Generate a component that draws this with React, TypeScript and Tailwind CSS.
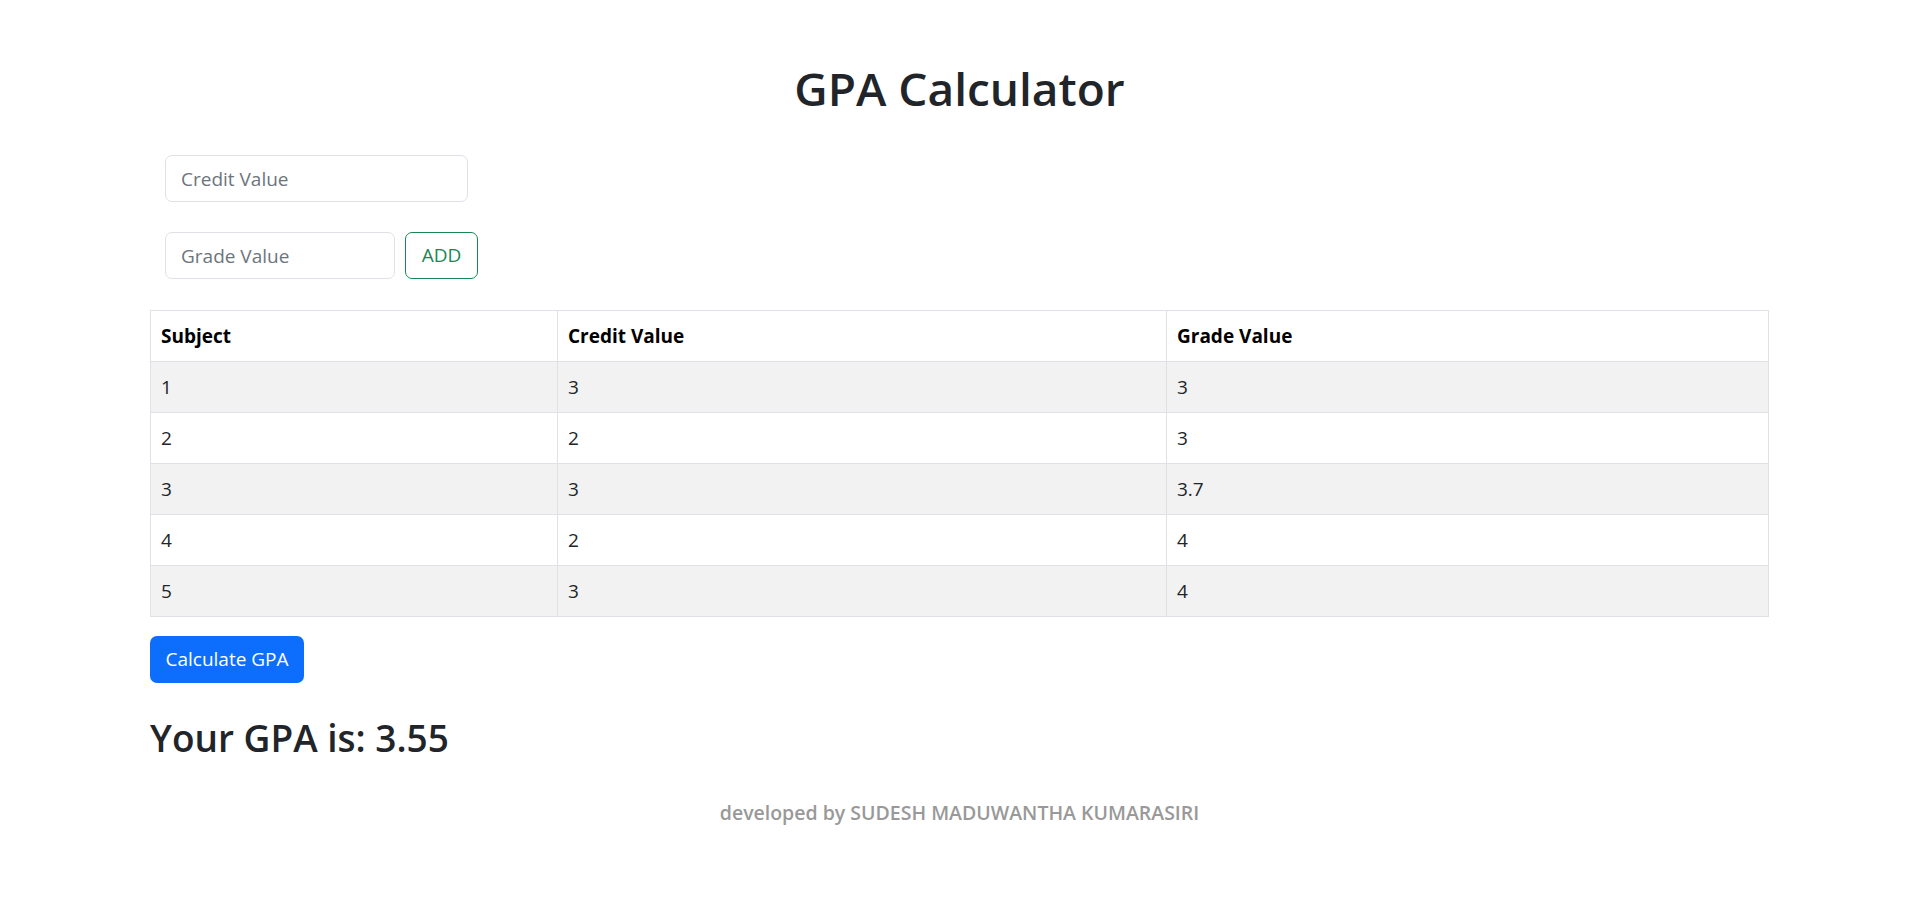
import { useState } from 'react';

type Row = { subject: number; credit: string; grade: string };

const initialRows: Row[] = [
  { subject: 1, credit: '3', grade: '3' },
  { subject: 2, credit: '2', grade: '3' },
  { subject: 3, credit: '3', grade: '3.7' },
  { subject: 4, credit: '2', grade: '4' },
  { subject: 5, credit: '3', grade: '4' },
];

export default function App() {
  const [rows, setRows] = useState<Row[]>(initialRows);
  const [credit, setCredit] = useState('');
  const [grade, setGrade] = useState('');
  const [gpa, setGpa] = useState('3.55');

  const addRow = () => {
    if (!credit || !grade) return;
    setRows([...rows, { subject: rows.length + 1, credit, grade }]);
    setCredit('');
    setGrade('');
  };

  const calculate = () => {
    let total = 0;
    let points = 0;
    rows.forEach((r) => {
      total += Number(r.credit);
      points += Number(r.credit) * Number(r.grade);
    });
    setGpa(total ? (points / total).toFixed(2) : '0');
  };

  return (
    <div className="min-h-screen bg-white text-[#212529] font-['Open_Sans',sans-serif] text-[19px]">
      <div className="ml-[150px] mr-[148px] pt-[58px]">
        <h1 className="text-center text-[46px] leading-[60px] font-semibold">GPA Calculator</h1>

        <div className="px-[15px] mt-[37px]">
          <input
            value={credit}
            onChange={(e) => setCredit(e.target.value)}
            placeholder="Credit Value"
            className="block w-[303px] h-[47px] px-[15px] border border-[#dee2e6] rounded-[7px] text-[19px] placeholder:text-[#6c757d] outline-none"
          />
          <div className="flex gap-[10px] mt-[30px]">
            <input
              value={grade}
              onChange={(e) => setGrade(e.target.value)}
              placeholder="Grade Value"
              className="block w-[230px] h-[47px] px-[15px] border border-[#dee2e6] rounded-[7px] text-[19px] placeholder:text-[#6c757d] outline-none"
            />
            <button
              onClick={addRow}
              className="h-[47px] w-[73px] border border-[#198754] text-[#198754] rounded-[7px] text-[19px]"
            >
              ADD
            </button>
          </div>
        </div>

        <table className="w-full table-fixed border-collapse mt-[31px] text-[19px]">
          <colgroup>
            <col className="w-[407px]" />
            <col className="w-[609px]" />
            <col />
          </colgroup>
          <thead>
            <tr className="h-[51px]">
              <th className="border border-[#dee2e6] px-[10px] text-left font-bold text-black">Subject</th>
              <th className="border border-[#dee2e6] px-[10px] text-left font-bold text-black">Credit Value</th>
              <th className="border border-[#dee2e6] px-[10px] text-left font-bold text-black">Grade Value</th>
            </tr>
          </thead>
          <tbody>
            {rows.map((r, i) => (
              <tr key={r.subject} className={`h-[51px] ${i % 2 === 0 ? 'bg-[#f2f2f2]' : 'bg-white'}`}>
                <td className="border border-[#dee2e6] px-[10px]">{r.subject}</td>
                <td className="border border-[#dee2e6] px-[10px]">{r.credit}</td>
                <td className="border border-[#dee2e6] px-[10px]">{r.grade}</td>
              </tr>
            ))}
          </tbody>
        </table>

        <button
          onClick={calculate}
          className="mt-[19px] h-[47px] w-[154px] bg-[#0d6efd] text-white rounded-[7px] text-[19px]"
        >
          Calculate GPA
        </button>

        <h2 className="mt-[31px] text-[37px] leading-[48px] font-semibold">Your GPA is: {gpa}</h2>

        <p className="mt-[36px] text-center text-[19.5px] leading-[30px] font-semibold text-[#999999]">
          developed by SUDESH MADUWANTHA KUMARASIRI
        </p>
      </div>
    </div>
  );
}
